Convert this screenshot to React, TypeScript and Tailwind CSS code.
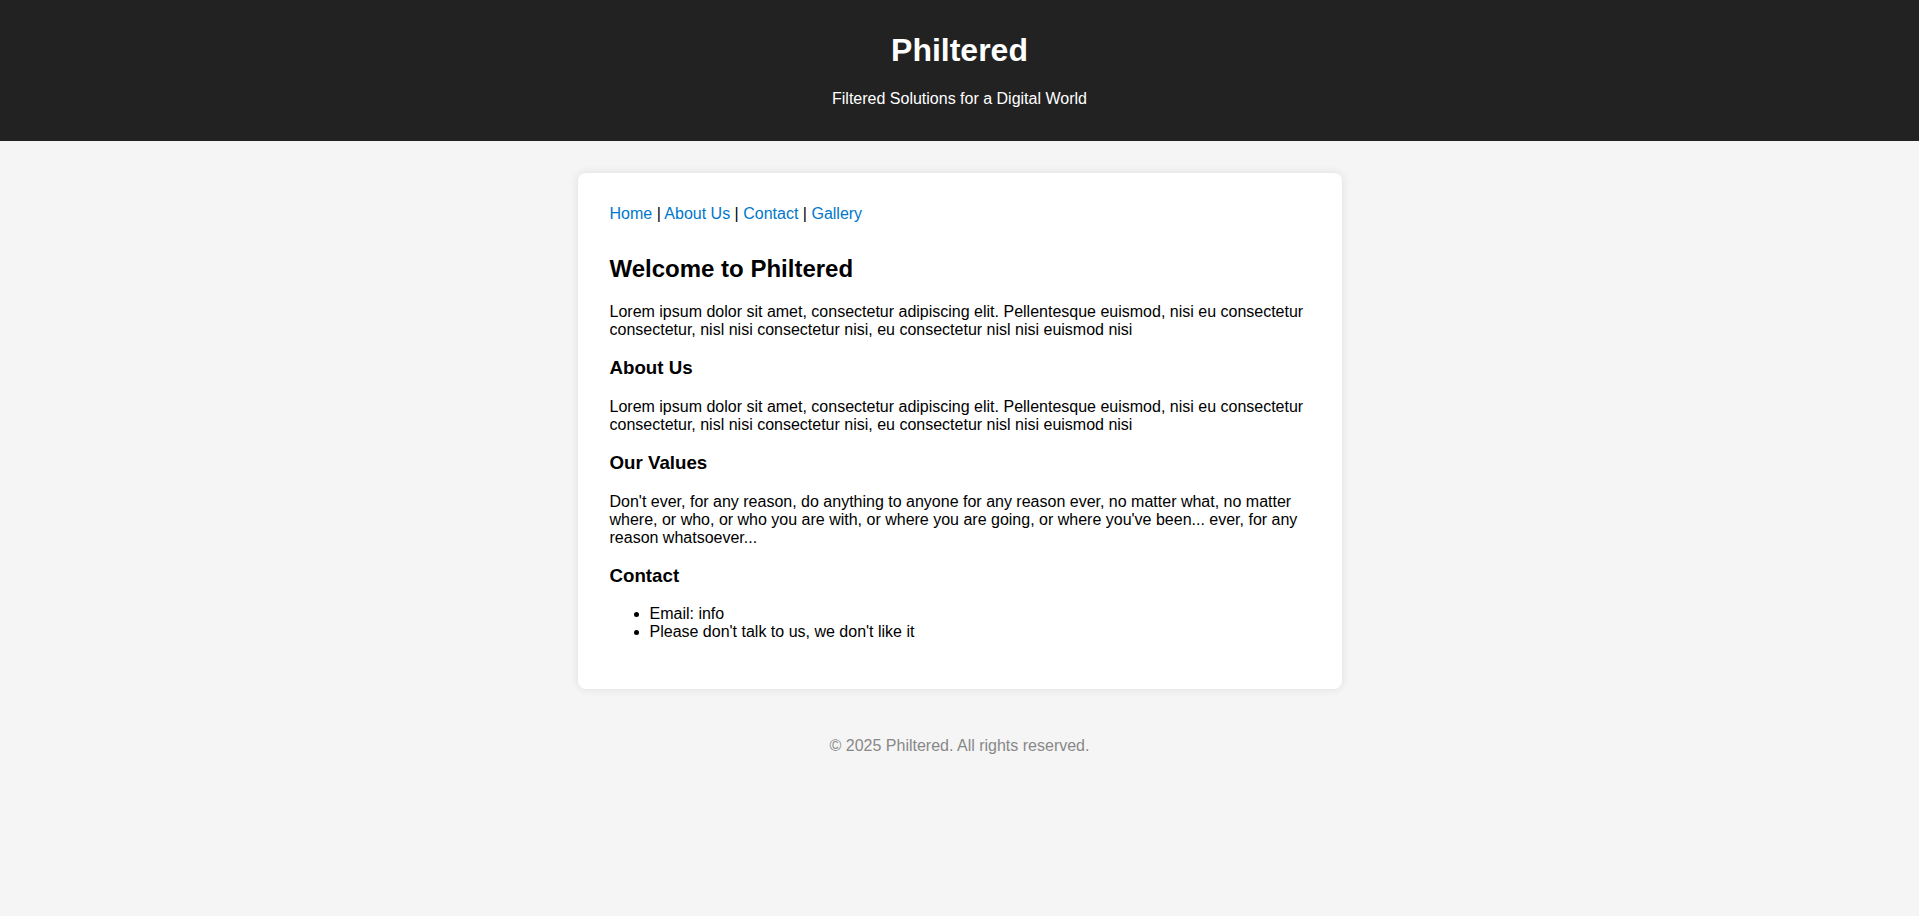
export default function App() {
  const font = { fontFamily: '"Liberation Sans", Arial, sans-serif' };
  return (
    <div className="min-h-[916px] bg-[#f5f5f5] text-black" style={font}>
      <header className="bg-[#222222] text-white text-center py-4">
        <h1 className="text-[32px] leading-[37px] font-bold mt-[15.7px] mb-[21.3px]">Philtered</h1>
        <p className="text-base leading-[18.4px] mt-0 mb-[16.3px]">Filtered Solutions for a Digital World</p>
      </header>
      <main className="pt-8">
        <div className="mx-auto w-[764px] bg-white rounded-lg p-8 shadow-[0_0_10px_rgba(0,0,0,0.1)]">
          <nav className="text-base leading-[18px] mb-8">
            <a className="text-[#0077cc]" href="#">Home</a> |{" "}
            <a className="text-[#0077cc]" href="#">About Us</a> |{" "}
            <a className="text-[#0077cc]" href="#">Contact</a> |{" "}
            <a className="text-[#0077cc]" href="#">Gallery</a>
          </nav>
          <h2 className="text-[24px] leading-[27.6px] font-bold mb-[20.5px]">Welcome to Philtered</h2>
          <p className="text-base leading-[18px] mb-[18.7px]">
            Lorem ipsum dolor sit amet, consectetur adipiscing elit. Pellentesque euismod, nisi eu consectetur consectetur, nisl nisi consectetur nisi, eu consectetur nisl nisi euismod nisi
          </p>
          <h3 className="text-[18.72px] leading-[21.5px] font-bold mb-[18.7px]">About Us</h3>
          <p className="text-base leading-[18px] mb-[18.7px]">
            Lorem ipsum dolor sit amet, consectetur adipiscing elit. Pellentesque euismod, nisi eu consectetur consectetur, nisl nisi consectetur nisi, eu consectetur nisl nisi euismod nisi
          </p>
          <h3 className="text-[18.72px] leading-[21.5px] font-bold mb-[18.7px]">Our Values</h3>
          <p className="text-base leading-[18px] mb-[18.7px]">
            Don't ever, for any reason, do anything to anyone for any reason ever, no matter what, no matter where, or who, or who you are with, or where you are going, or where you've been... ever, for any reason whatsoever...
          </p>
          <h3 className="text-[18.72px] leading-[21.5px] font-bold mb-[18.7px]">Contact</h3>
          <ul className="list-disc pl-10 text-base leading-[18px] mb-4">
            <li>Email: info</li>
            <li>Please don't talk to us, we don't like it</li>
          </ul>
        </div>
      </main>
      <footer className="text-center text-[#888888] text-base leading-[18px] pt-12">
        © 2025 Philtered. All rights reserved.
      </footer>
    </div>
  );
}
